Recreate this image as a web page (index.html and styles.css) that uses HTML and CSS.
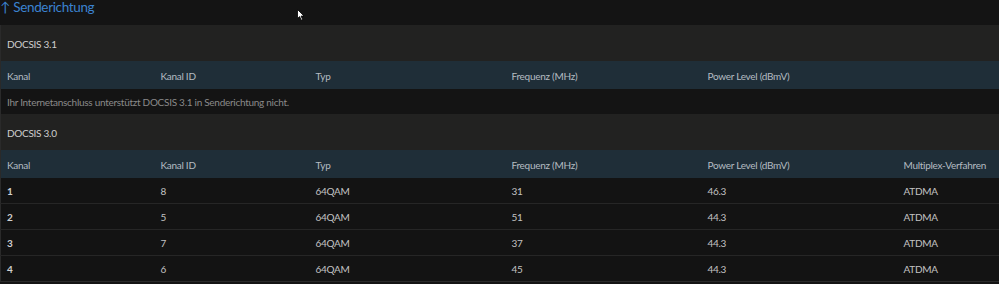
FILE: index.html
```html
<!DOCTYPE html>
<html lang="de">
<head>
<meta charset="utf-8">
<link rel="stylesheet" href="styles.css">
</head>
<body>
<h2 class="title"><span class="arrow">↑</span> Senderichtung</h2>
<svg class="cursor" width="8" height="12" viewBox="0 0 8 12" aria-hidden="true">
  <path d="M0.5 0.5 L0.5 9.5 L2.6 7.6 L4.2 11.2 L5.6 10.6 L4.1 7.1 L7 7 Z" fill="#ffffff" stroke="#000000" stroke-width="0.8"/>
</svg>
<table class="docsis">
  <colgroup>
    <col class="c1"><col class="c2"><col class="c3"><col class="c4"><col class="c5"><col class="c6">
  </colgroup>
  <tr class="section"><td colspan="6">DOCSIS 3.1</td></tr>
  <tr class="head"><th>Kanal</th><th>Kanal ID</th><th>Typ</th><th>Frequenz (MHz)</th><th>Power Level (dBmV)</th><th></th></tr>
  <tr class="msg"><td colspan="6">Ihr Internetanschluss unterstützt DOCSIS 3.1 in Senderichtung nicht.</td></tr>
  <tr class="section"><td colspan="6">DOCSIS 3.0</td></tr>
  <tr class="head"><th>Kanal</th><th>Kanal ID</th><th>Typ</th><th>Frequenz (MHz)</th><th>Power Level (dBmV)</th><th>Multiplex-Verfahren</th></tr>
  <tr class="row"><td class="num">1</td><td>8</td><td>64QAM</td><td>31</td><td>46.3</td><td>ATDMA</td></tr>
  <tr class="row"><td class="num">2</td><td>5</td><td>64QAM</td><td>51</td><td>44.3</td><td>ATDMA</td></tr>
  <tr class="row"><td class="num">3</td><td>7</td><td>64QAM</td><td>37</td><td>44.3</td><td>ATDMA</td></tr>
  <tr class="row"><td class="num">4</td><td>6</td><td>64QAM</td><td>45</td><td>44.3</td><td>ATDMA</td></tr>
</table>
</body>
</html>
```

FILE: styles.css
```css
html, body {
  margin: 0;
  padding: 0;
  background: #141414;
}
body {
  position: relative;
  font-family: Lato, "Noto Sans", sans-serif;
  color: #c6c6c6;
  width: 999px;
  height: 284px;
  overflow: hidden;
}
.title {
  margin: 0;
  height: 25px;
  padding-left: 0;
  font-size: 13.5px;
  font-weight: 400;
  line-height: 15px;
  letter-spacing: -0.35px;
  color: #3b82cf;
}
.arrow {
  letter-spacing: 0;
}
.cursor {
  position: absolute;
  left: 297px;
  top: 9px;
}
.docsis {
  width: 999px;
  border-collapse: collapse;
  table-layout: fixed;
  font-size: 10px;
  letter-spacing: -0.28px;
  border-left: 1px solid #2a2a2a;
  border-bottom: 1px solid #2a2a2a;
}
.c1 { width: 154px; }
.c2 { width: 155px; }
.c3 { width: 196px; }
.c4 { width: 196px; }
.c5 { width: 196px; }
.c6 { width: auto; }
.docsis td, .docsis th {
  padding: 1px 0 0 6px;
  text-align: left;
  font-weight: 400;
  white-space: nowrap;
}
.section td {
  height: 35px;
  background: #222221;
  color: #cfcfcf;
}
.head th {
  height: 27px;
  background: #1f2e38;
  color: #b4bcc2;
}
.msg td {
  height: 24px;
  background: #141414;
  color: #8a8a8a;
}
.row td {
  height: 24px;
  background: #131313;
  color: #c3c3c3;
  border-top: 1px solid #262626;
}
.head + .row td { border-top: 0; }
.row td.num {
  font-weight: 700;
  color: #d0d0d0;
}
```
